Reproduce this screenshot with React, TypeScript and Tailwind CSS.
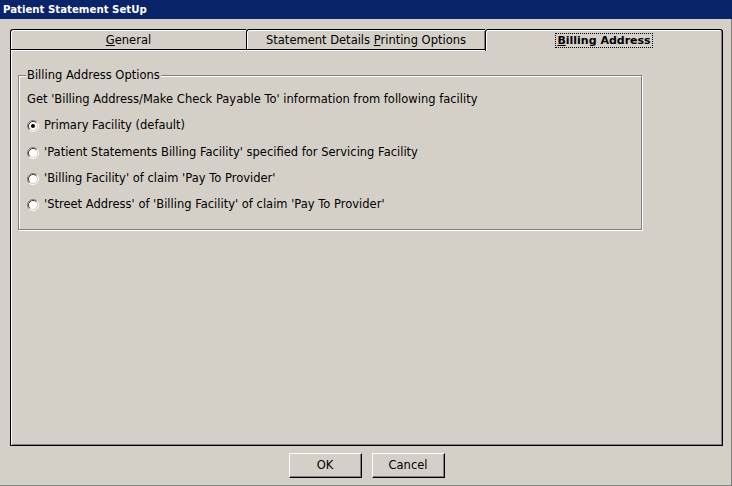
import React from "react";

const font = "font-['DejaVu_Sans',sans-serif]";

function Radio({ checked }: { checked?: boolean }) {
  return (
    <svg width="12" height="12" viewBox="0 0 12 12" className="shrink-0">
      <circle cx="6" cy="6" r="4.5" fill="#ffffff" />
      <path d="M2.11 9.89 A5.5 5.5 0 0 1 9.89 2.11" fill="none" stroke="#808080" strokeWidth="1" />
      <path d="M9.89 2.11 A5.5 5.5 0 0 1 2.11 9.89" fill="none" stroke="#ffffff" strokeWidth="1" />
      <path d="M2.82 9.18 A4.5 4.5 0 0 1 9.18 2.82" fill="none" stroke="#404040" strokeWidth="1" />
      <path d="M9.18 2.82 A4.5 4.5 0 0 1 2.82 9.18" fill="none" stroke="#d4d0c8" strokeWidth="1" />
      {checked && <circle cx="6" cy="6" r="2" fill="#000000" />}
    </svg>
  );
}

function RadioRow({ label, checked, cls }: { label: string; checked?: boolean; cls: string }) {
  return (
    <div className={`flex items-center h-[13px] gap-[5px] ${cls}`}>
      <Radio checked={checked} />
      <span className="leading-[13px] whitespace-nowrap">{label}</span>
    </div>
  );
}

export default function App() {
  return (
    <div className={`w-[732px] h-[486px] bg-[#d4d0c8] flex flex-col text-[11.5px] text-black ${font}`}>
      <div className="h-[19px] bg-[#0a246a] text-white font-bold text-[10.2px] leading-[20px] pl-[3px] shrink-0">
        Patient Statement SetUp
      </div>
      <div className="flex-1 flex flex-col border-r border-b border-[#808080] pl-[10px] pr-[8px] pt-[10px]">
        {/* Tabs */}
        <div className="flex items-start h-[20px] relative z-10">
          <div className="w-[236px] h-[20px] border-t border-l border-black rounded-tl-[3px] shadow-[inset_1px_1px_0_#ffffff] flex items-center justify-center pt-[2px]">
            <span>
              <span className="underline">G</span>eneral
            </span>
          </div>
          <div className="w-[239px] h-[20px] border-t border-l border-black rounded-tl-[3px] shadow-[inset_1px_1px_0_#ffffff,inset_-1px_0_0_#808080] flex items-center justify-center pt-[2px]">
            <span>
              Statement Details <span className="underline">P</span>rinting Options
            </span>
          </div>
          <div className="w-[238px] h-[22px] bg-[#d4d0c8] border-t border-l border-r border-black rounded-tl-[3px] rounded-tr-[3px] shadow-[inset_1px_1px_0_#ffffff,inset_-1px_0_0_#808080] flex items-start justify-center pt-[4px]">
            <span className="font-bold text-[11px] outline-1 outline-dotted outline-black px-[1px] leading-[13px]">
              <span className="underline">B</span>illing Address
            </span>
          </div>
        </div>
        {/* Panel */}
        <div className="h-[397px] border border-black shadow-[inset_1px_1px_0_#ffffff,inset_-1px_-1px_0_#808080] pt-[25px] pl-[7px]">
          <div className="relative w-[624px] h-[155px] border border-[#808080] shadow-[inset_1px_1px_0_#ffffff,1px_1px_0_#ffffff] pt-[17px] pl-[8px]">
            <div className="absolute left-[7px] top-[-7px] px-[1px] bg-[#d4d0c8] leading-[13px] whitespace-nowrap">
              Billing Address Options
            </div>
            <div className="leading-[13px] h-[13px] whitespace-nowrap">
              Get 'Billing Address/Make Check Payable To' information from following facility
            </div>
            <RadioRow cls="mt-[13px]" checked label="Primary Facility (default)" />
            <RadioRow cls="mt-[14px]" label="'Patient Statements Billing Facility' specified for Servicing Facility" />
            <RadioRow cls="mt-[13px]" label="'Billing Facility' of claim 'Pay To Provider'" />
            <RadioRow cls="mt-[13px]" label="'Street Address' of 'Billing Facility' of claim 'Pay To Provider'" />
          </div>
        </div>
        {/* Buttons */}
        <div className="flex justify-center gap-[10px] mt-[7px]">
          <button className="w-[73px] h-[25px] border border-t-white border-l-white border-r-black border-b-black shadow-[inset_-1px_-1px_0_#808080] bg-[#d4d0c8] text-[11.5px]">
            OK
          </button>
          <button className="w-[73px] h-[25px] border border-t-white border-l-white border-r-black border-b-black shadow-[inset_-1px_-1px_0_#808080] bg-[#d4d0c8] text-[11.5px]">
            Cancel
          </button>
        </div>
      </div>
    </div>
  );
}
